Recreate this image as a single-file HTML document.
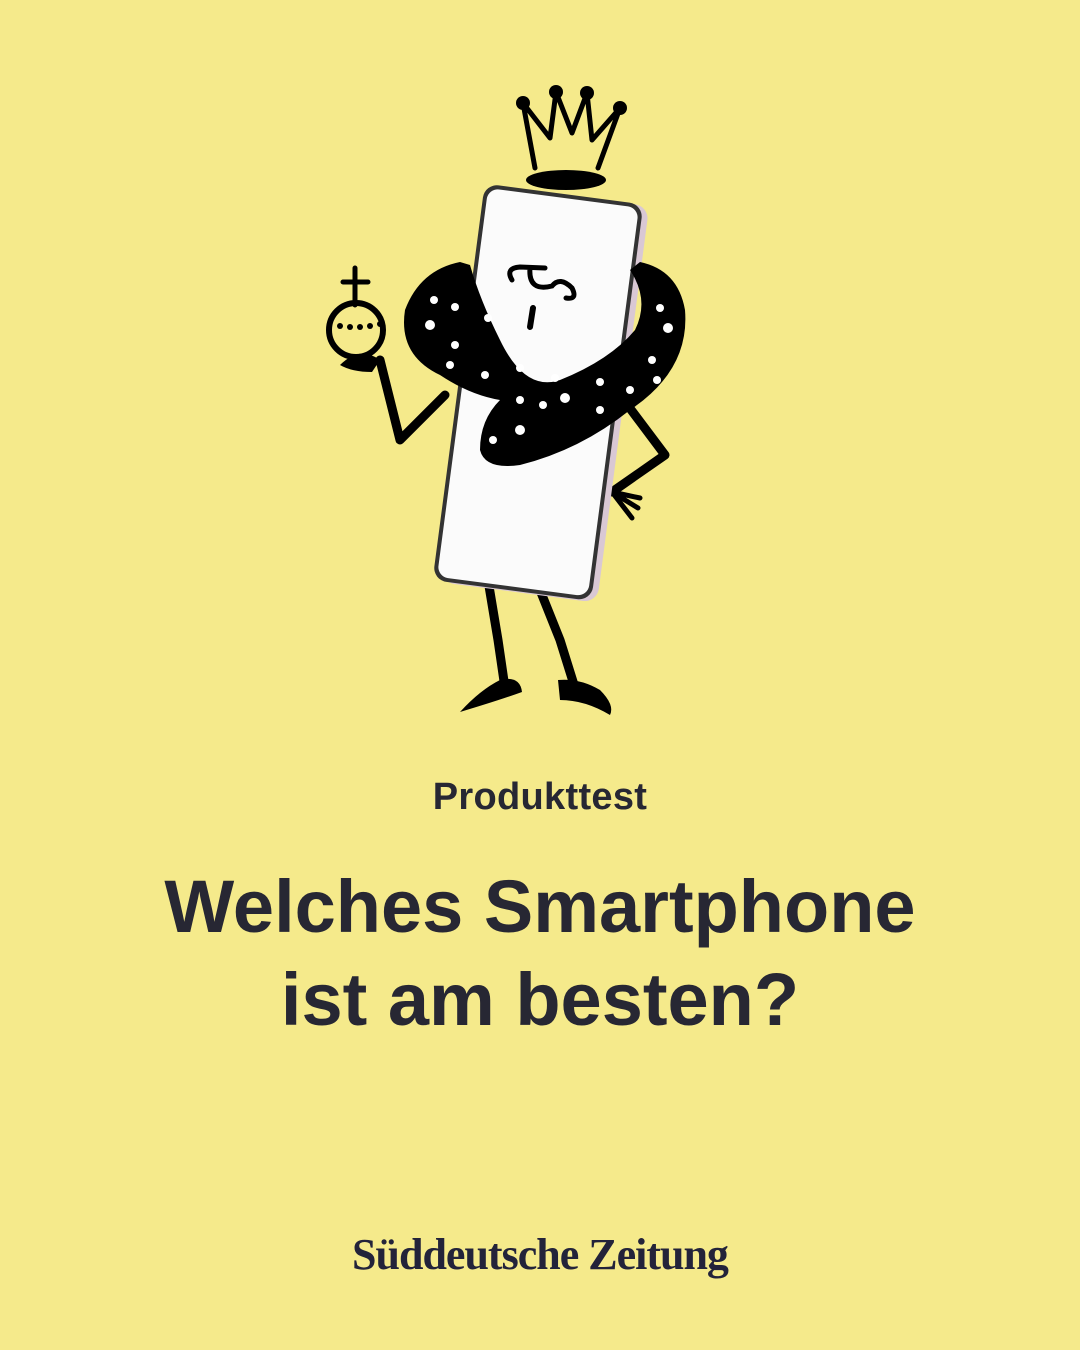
<!DOCTYPE html>
<html><head><meta charset="utf-8"><style>
html,body{margin:0;padding:0}
body{width:1080px;height:1350px;background:#f5ea8b;position:relative;overflow:hidden;font-family:"Liberation Sans",sans-serif;color:#272733}
.t{position:absolute;left:0;width:1080px;text-align:center;font-weight:bold;white-space:nowrap}
</style></head><body>
<svg width="1080" height="740" style="position:absolute;left:0;top:0" viewBox="0 0 1080 740">
 <g stroke="#000" stroke-linecap="round" stroke-linejoin="round" fill="none">
  <path d="M488 580 L498 640 L505 688" stroke-width="9"/>
  <path d="M540 590 L560 640 L575 688" stroke-width="9"/>
  <path d="M620 395 L665 455 L612 492" stroke-width="9"/>
  <path d="M612 492 L640 498 M612 492 L638 508 M612 492 L632 518" stroke-width="5"/>
  <path d="M445 395 L400 440 L380 360" stroke-width="9"/>
  <path d="M535 168 L523 103 L550 138 L556 92 L572 133 L587 93 L592 140 L620 108 L598 168" stroke-width="5"/>
  <path d="M355 268 L355 305 M343 282 L368 282" stroke-width="5"/>
  <circle cx="356" cy="330" r="27" stroke-width="6"/>
 </g>
 <g fill="#000"><circle cx="523" cy="103" r="7"/><circle cx="556" cy="92" r="7"/><circle cx="587" cy="93" r="7"/><circle cx="620" cy="108" r="7"/>
  <ellipse cx="566" cy="180" rx="40" ry="10"/>
  <circle cx="340" cy="326" r="3"/><circle cx="350" cy="327" r="3"/><circle cx="360" cy="327" r="3"/><circle cx="370" cy="326" r="3"/><circle cx="380" cy="324" r="3"/>
  <path d="M460 712 Q480 690 500 680 Q520 675 522 692 Q500 700 460 712Z"/>
  <path d="M558 680 Q580 678 600 690 Q615 705 610 715 Q585 700 560 700Z"/>
  <path d="M340 365 Q360 345 380 360 L372 372 Q352 372 340 365Z"/>
 </g>
 <g transform="rotate(7.5 536 392)">
  <rect x="466" y="193" width="158" height="400" rx="14" fill="#d9c8d4"/>
  <rect x="458" y="192" width="160" height="400" rx="14" fill="#333"/>
  <rect x="462" y="196" width="152" height="392" rx="11" fill="#fbfbfb"/>
 </g>
 <path fill="#000" d="M460 262 Q420 270 405 310 Q398 355 440 375 Q470 395 500 400 Q480 420 480 450 Q485 470 520 465 Q580 450 630 410 Q690 370 685 310 Q678 270 640 262 L630 270 Q650 300 635 330 Q610 360 560 380 Q525 392 500 340 Q480 300 470 265Z"/>
 <g fill="#fff">
  <circle cx="434" cy="300" r="4"/><circle cx="455" cy="307" r="4"/><circle cx="430" cy="325" r="5"/><circle cx="455" cy="345" r="4"/><circle cx="450" cy="365" r="4"/>
  <circle cx="488" cy="318" r="4"/><circle cx="485" cy="375" r="4"/><circle cx="520" cy="368" r="4"/><circle cx="555" cy="378" r="4"/><circle cx="565" cy="398" r="5"/>
  <circle cx="520" cy="400" r="4"/><circle cx="543" cy="405" r="4"/><circle cx="520" cy="430" r="5"/><circle cx="493" cy="440" r="4"/><circle cx="600" cy="382" r="4"/>
  <circle cx="630" cy="390" r="4"/><circle cx="652" cy="360" r="4"/><circle cx="668" cy="328" r="5"/><circle cx="660" cy="308" r="4"/><circle cx="657" cy="380" r="4"/><circle cx="600" cy="410" r="4"/>
 </g>
 <path d="M512 280 Q505 268 520 267 L545 268 M530 268 Q528 292 552 286 Q560 276 572 288 Q578 300 566 298" stroke="#000" stroke-width="5" fill="none" stroke-linecap="round"/>
 <path d="M533 308 L530 327" stroke="#000" stroke-width="6" stroke-linecap="round"/>
</svg>
<div class="t" style="top:776px;font-size:38px;line-height:42px;letter-spacing:0.3px">Produkttest</div>
<div class="t" style="top:860px;font-size:74px;line-height:93px;letter-spacing:0px">Welches Smartphone<br>ist am besten?</div>
<div class="t" style="top:1230px;font-family:'Liberation Serif',serif;font-size:44px;line-height:50px;letter-spacing:-1px;color:#23233a">Süddeutsche Zeitung</div>
</body></html>
